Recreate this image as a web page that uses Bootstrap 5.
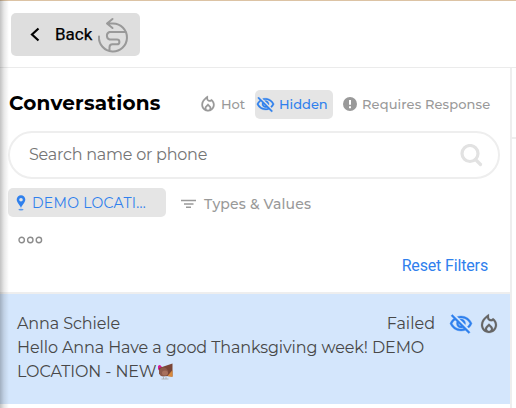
<!DOCTYPE html>
<html lang="en">
<head>
<meta charset="utf-8">
<meta name="viewport" content="width=device-width, initial-scale=1">
<title>Conversations</title>
<link href="https://cdn.jsdelivr.net/npm/bootstrap@5.3.0/dist/css/bootstrap.min.css" rel="stylesheet">
<style>
body{font-family:Montserrat,Inter,sans-serif;color:#484848;height:408px;overflow:hidden;background:#fff;white-space:nowrap}
svg{display:block;flex:none}
.edge-shadow{width:9px;z-index:5;background:linear-gradient(90deg,rgba(0,0,0,.24),rgba(0,0,0,.09) 45%,transparent)}
.top-bar{height:68px;border-top:1px solid #dcc3a4;border-bottom:1px solid #ebebeb;padding:12px 0 0 11px}
.btn-back{width:129px;height:43px;background:#dedede;border-radius:5px;font:400 17px/43px Roboto,sans-serif;color:#000;padding:0 11px 0 18px}
.btn-back:hover{background:#d6d6d6}
.back-text{margin-left:14px;-webkit-text-stroke:.25px #000}
.inbox{width:512px;height:340px;border-right:2px solid #eee}
.side-pane{height:71px;border-bottom:2px solid #eee}
.title-row{height:30px;margin:21px 0 0 9px}
.title{font-size:20px;font-weight:700;color:#000;width:191px;letter-spacing:.2px;line-height:28px;padding-bottom:2px}
.chip{height:29px;border-radius:5px;color:#999;font-size:13px;line-height:29px;font-weight:500}
.chip-on{background:#e5e5e5;color:#2f80ed}
.chip-hot{width:55px;padding-left:0}
.t-hot{margin-left:5px}
.chip-hidden{width:78px;padding-left:1px}
.t-hidden{margin-left:4px}
.chip-reply{padding-left:10px}
.t-reply{margin-left:5px;letter-spacing:.12px}
.search{width:492px;height:48px;margin:12px 0 0 8px;border:2px solid #eee;border-radius:24px;padding:0 15px 0 19px}
.search input{font-size:16px;color:#757575;outline:0;background:none;letter-spacing:-.23px}
.search input::placeholder{color:#757575;opacity:1}
.filters{margin:9px 0 0 8px}
.chip-place{width:158px;font-size:14px;font-weight:400;padding-left:8px}
.t-place{margin-left:6px;letter-spacing:.3px;padding-top:2px}
.chip-types{font-size:14px;padding:3px 0 0 15px}
.t-types{margin-left:8px;letter-spacing:.16px}
.more{margin:19px 0 0 18px;color:#8c8c8c}
.reset{margin:10px 22px 0 0;font:400 16px/24px Roboto,sans-serif;color:#2f80ed;letter-spacing:-.15px}
.thread{height:112px;margin-top:14px;border-top:2px solid #eee;background:#d4e6fc;font-size:16px;line-height:24px;padding:18px 11px 0 17px}
.t-name,.t-msg1,.t-msg2{letter-spacing:-.1px}
.eye{margin:0 6px 0 14px}
.turkey{margin:3px 0 0 1px}
</style>
</head>
<body class="position-relative">
<svg width="0" height="0" class="position-absolute" aria-hidden="true">
<symbol id="eye-off" viewBox="0 0 24 24"><path fill="currentColor" stroke="currentColor" stroke-width=".35" d="M12 6c3.79 0 7.17 2.13 8.82 5.5-.59 1.22-1.42 2.27-2.41 3.12l1.41 1.41c1.39-1.23 2.49-2.77 3.18-4.53C21.27 7.11 17 4 12 4c-1.27 0-2.49.2-3.64.57l1.65 1.65C10.66 6.09 11.32 6 12 6zm-1.07 1.14L13 9.21c.57.25 1.03.71 1.28 1.28l2.07 2.07c.08-.34.14-.7.14-1.07C16.5 9.01 14.48 7 12 7c-.37 0-.72.05-1.07.14zM2.01 3.87l2.68 2.68C3.06 7.83 1.77 9.53 1 11.5 2.73 15.89 7 19 12 19c1.52 0 2.98-.29 4.32-.82l3.42 3.42 1.41-1.41L3.42 2.45 2.01 3.87zm7.5 7.5l2.61 2.61c-.04.01-.08.02-.12.02-1.38 0-2.5-1.12-2.5-2.5 0-.05.01-.08.01-.13zm-3.4-3.4l1.75 1.75c-.23.55-.36 1.15-.36 1.78 0 2.48 2.02 4.5 4.5 4.5.63 0 1.23-.13 1.77-.36l.98.98c-.88.24-1.8.38-2.75.38-3.79 0-7.17-2.13-8.82-5.5.7-1.43 1.72-2.61 2.93-3.53z"/></symbol>
<symbol id="fire" viewBox="0 0 24 24"><path fill="currentColor" stroke="currentColor" stroke-width=".2" d="M16 6l-.44.55C14.38 8.02 12 7.19 12 5.3V2S4 6 4 13c0 4.42 3.58 8 8 8s8-3.58 8-8c0-2.96-1.61-5.62-4-7zM12 19c-1.1 0-2-.87-2-1.94 0-.51.2-.99.58-1.36L12 14.300l1.430 1.4c.37.37.57.85.57 1.360C14 18.130 13.100 19 12 19zM15.960 17.500c.04-.36.22-1.890-1.130-3.220L12 11.500l-2.830 2.780c-1.360 1.340-1.170 2.880-1.130 3.220C6.790 16.400 6 14.790 6 13c0-3.160 2.130-5.650 4.030-7.250.23 1.990 1.930 3.550 3.990 3.550.78 0 1.540-.23 2.180-.66C17.340 9.780 18 11.350 18 13c0 1.790-.79 3.400-2.040 4.500z"/></symbol>
</svg>
<div class="edge-shadow position-absolute top-0 start-0 h-100"></div>
<header class="top-bar">
  <button class="btn-back border-0 d-flex align-items-center">
    <svg width="12" height="16" viewBox="0 0 12 16"><path d="M9.500 1.500 3 7.500l6.500 6" fill="none" stroke="#000" stroke-width="2.200"/></svg>
    <span class="back-text">Back</span>
    <svg class="ms-auto" width="32" height="36" viewBox="0 0 32 36" fill="none" stroke="#999" stroke-width="2" stroke-linecap="round" stroke-linejoin="round"><path d="M2 19.500A14 14 0 1 0 16 6.500H10M15.500 2 10 6.500l5.500 4.500M29 15H12.500a4 4 0 0 0 0 7.500H20a2.400 2.400 0 0 1 0 4.800h-4.500a3 3 0 0 0-3 3v2.500"/></svg>
  </button>
</header>
<div class="d-flex">
<main class="inbox d-flex flex-column flex-shrink-0">
  <div class="title-row d-flex align-items-center">
    <h1 class="title m-0">Conversations</h1>
    <div class="chip chip-hot d-flex align-items-center"><svg width="16" height="20" viewBox="3 0 18 24"><use href="#fire" width="24" height="24"/></svg><span class="t-hot">Hot</span></div>
    <div class="chip chip-on chip-hidden d-flex align-items-center"><svg width="19" height="19"><use href="#eye-off"/></svg><span class="t-hidden">Hidden</span></div>
    <div class="chip chip-reply d-flex align-items-center"><svg width="14" height="14" viewBox="0 0 14 14"><circle cx="7" cy="7" r="7" fill="#999"/><path d="M7 3v4.800M7 9.200v2" stroke="#fff" stroke-width="2"/></svg><span class="t-reply">Requires Response</span></div>
  </div>
  <div class="search d-flex align-items-center">
    <input class="border-0 p-0 flex-grow-1" placeholder="Search name or phone" aria-label="Search name or phone">
    <svg width="23" height="23" viewBox="0 0 23 23" fill="none" stroke="#e2e2e2" stroke-width="3.200"><circle cx="10" cy="9.500" r="8"/><path d="m15.500 15.500 5 5" stroke-linecap="round"/></svg>
  </div>
  <div class="filters d-flex">
    <div class="chip chip-on chip-place d-flex align-items-center"><svg width="10" height="16" viewBox="0 0 10 16"><path d="M5 .3a4.300 4.300 0 0 0-4.300 4.300C.7 7.500 3.500 9.300 5 13c1.500-3.700 4.300-5.500 4.300-8.400A4.300 4.300 0 0 0 5 .3zM5 2.900a1.800 1.800 0 1 1 0 3.600 1.800 1.800 0 0 1 0-3.600z" fill="#2f80ed" fill-rule="evenodd"/><ellipse cx="5" cy="14.600" rx="2.600" ry=".9" fill="#2f80ed" opacity=".75"/></svg><span class="t-place">DEMO LOCATI...</span></div>
    <div class="chip chip-types d-flex align-items-center"><svg width="15" height="10" viewBox="0 0 15 10"><path d="M0 1.500h15M3 5h9.500M5 8.300h5" stroke="#999" stroke-width="1.500"/></svg><span class="t-types">Types &amp; Values</span></div>
  </div>
  <svg class="more" width="25" height="8" viewBox="0 0 25 8" fill="none" stroke="currentColor" stroke-width="1.400"><circle cx="3.700" cy="4" r="2.700"/><circle cx="12.300" cy="4" r="2.700"/><circle cx="20.900" cy="4" r="2.700"/></svg>
  <a href="#" class="reset align-self-end text-decoration-none">Reset Filters</a>
  <article class="thread">
    <div class="d-flex align-items-center"><span class="t-name">Anna Schiele</span><span class="t-failed ms-auto">Failed</span>
      <svg class="eye" width="24" height="24" color="#2f80ed"><use href="#eye-off"/></svg><svg class="flame" width="20" height="24" viewBox="2 0 20 24" color="#666"><use href="#fire" width="24" height="24"/></svg></div>
    <div class="t-msg1">Hello Anna Have a good Thanksgiving week! DEMO</div>
    <div class="d-flex"><span class="t-msg2">LOCATION - NEW</span><svg class="turkey" width="17" height="17" viewBox="0 0 17 17"><path d="M1 3q2-2 3 0l3 3-4 3-2-3z" fill="#d61b9b"/><path d="M2 5 15.500.5v13L9 13 2 11z" fill="#7a4637"/><path d="M15.500 7v7l-5-1z" fill="#d98a3c"/><circle cx="6.500" cy="9" r="4.500" fill="#8d5a4a"/><ellipse cx="8" cy="10" rx="3" ry="2.500" fill="#a8705c"/><path d="M6.500 13v3M9 13v3M4.500 16h7" stroke="#aaa" stroke-width=".8"/></svg></div>
  </article>
</main>
<aside class="side-pane flex-grow-1"></aside>
</div>
<script src="https://cdn.jsdelivr.net/npm/bootstrap@5.3.0/dist/js/bootstrap.bundle.min.js"></script>
</body>
</html>
